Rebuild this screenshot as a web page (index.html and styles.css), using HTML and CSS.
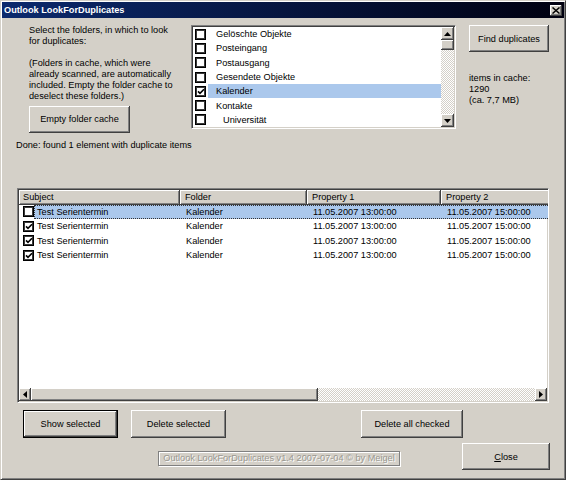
FILE: index.html
```html
<!DOCTYPE html>
<html lang="en">
<head>
    <meta charset="UTF-8">
    <title>Outlook LookForDuplicates</title>
    <link rel="stylesheet" href="styles.css">
</head>
<body>
    <div class="window">
        <!-- Title bar -->
        <div class="title-bar">
            <span class="title">Outlook LookForDuplicates</span>
            <span class="title-close">
                <svg width="8" height="7" viewBox="0 0 8 7"><path d="M0.5 0.5 L7.5 6.5 M7.5 0.5 L0.5 6.5" stroke="#000" stroke-width="1.5" fill="none"/></svg>
            </span>
        </div>

        <div class="client">
            <!-- Folder selection -->
            <div class="top">
                <div class="intro">
                    <p>Select the folders, in which to look<br>for duplicates:</p>
                    <p>(Folders in cache, which were<br>already scanned, are automatically<br>included. Empty the folder cache to<br>deselect these folders.)</p>
                    <button class="btn btn-cache">Empty folder cache</button>
                </div>

                <div class="folder-box sunken">
                    <ul class="folder-list">
                        <li><span class="check"></span><span class="folder-name">Gelöschte Objekte</span></li>
                        <li><span class="check"></span><span class="folder-name">Posteingang</span></li>
                        <li><span class="check"></span><span class="folder-name">Postausgang</span></li>
                        <li><span class="check"></span><span class="folder-name">Gesendete Objekte</span></li>
                        <li class="selected"><span class="check"><svg width="8" height="7" viewBox="0 0 8 7"><path d="M1 3.4 L3 5.4 L7 1.2" stroke="#000" stroke-width="1.6" fill="none"/></svg></span><span class="folder-name">Kalender</span></li>
                        <li><span class="check"></span><span class="folder-name">Kontakte</span></li>
                        <li><span class="check"></span><span class="folder-name sub">Universität</span></li>
                    </ul>
                    <div class="vscroll">
                        <span class="sb-btn"><svg width="7" height="4" viewBox="0 0 7 4"><path d="M3.5 0 L7 4 L0 4 Z" fill="#000"/></svg></span>
                        <span class="sb-thumb-v"></span>
                        <span class="sb-track"></span>
                        <span class="sb-btn"><svg width="7" height="4" viewBox="0 0 7 4"><path d="M0 0 L7 0 L3.5 4 Z" fill="#000"/></svg></span>
                    </div>
                </div>

                <div class="side">
                    <button class="btn btn-find">Find duplicates</button>
                    <p class="cache-info">items in cache:<br>1290<br>(ca. 7,7 MB)</p>
                </div>
            </div>

            <p class="status">Done: found 1 element with duplicate items</p>

            <!-- Results list -->
            <div class="results sunken">
                <div class="results-head">
                    <span class="head-cell col-subject">Subject</span>
                    <span class="head-cell col-folder">Folder</span>
                    <span class="head-cell col-prop">Property 1</span>
                    <span class="head-cell col-prop2">Property 2</span>
                </div>
                <div class="results-body">
                    <div class="result-row selected">
                        <span class="check"></span>
                        <span class="row-cells">
                            <span class="cell-subject">Test Serientermin</span>
                            <span class="cell-folder">Kalender</span>
                            <span class="cell-prop">11.05.2007 13:00:00</span>
                            <span class="cell-prop2">11.05.2007 15:00:00</span>
                        </span>
                    </div>
                    <div class="result-row">
                        <span class="check"><svg width="8" height="7" viewBox="0 0 8 7"><path d="M1 3.4 L3 5.4 L7 1.2" stroke="#000" stroke-width="1.6" fill="none"/></svg></span>
                        <span class="row-cells">
                            <span class="cell-subject">Test Serientermin</span>
                            <span class="cell-folder">Kalender</span>
                            <span class="cell-prop">11.05.2007 13:00:00</span>
                            <span class="cell-prop2">11.05.2007 15:00:00</span>
                        </span>
                    </div>
                    <div class="result-row">
                        <span class="check"><svg width="8" height="7" viewBox="0 0 8 7"><path d="M1 3.4 L3 5.4 L7 1.2" stroke="#000" stroke-width="1.6" fill="none"/></svg></span>
                        <span class="row-cells">
                            <span class="cell-subject">Test Serientermin</span>
                            <span class="cell-folder">Kalender</span>
                            <span class="cell-prop">11.05.2007 13:00:00</span>
                            <span class="cell-prop2">11.05.2007 15:00:00</span>
                        </span>
                    </div>
                    <div class="result-row">
                        <span class="check"><svg width="8" height="7" viewBox="0 0 8 7"><path d="M1 3.4 L3 5.4 L7 1.2" stroke="#000" stroke-width="1.6" fill="none"/></svg></span>
                        <span class="row-cells">
                            <span class="cell-subject">Test Serientermin</span>
                            <span class="cell-folder">Kalender</span>
                            <span class="cell-prop">11.05.2007 13:00:00</span>
                            <span class="cell-prop2">11.05.2007 15:00:00</span>
                        </span>
                    </div>
                </div>
                <div class="hscroll">
                    <span class="sb-btn"><svg width="4" height="7" viewBox="0 0 4 7"><path d="M0 3.5 L4 0 L4 7 Z" fill="#000"/></svg></span>
                    <span class="sb-thumb-h"></span>
                    <span class="sb-track"></span>
                    <span class="sb-btn"><svg width="4" height="7" viewBox="0 0 4 7"><path d="M0 0 L4 3.5 L0 7 Z" fill="#000"/></svg></span>
                </div>
            </div>

            <!-- Buttons -->
            <div class="actions">
                <button class="btn btn-default btn-show">Show selected</button>
                <button class="btn btn-delete">Delete selected</button>
                <button class="btn btn-delete-all">Delete all checked</button>
            </div>
            <div class="footer">
                <span class="version">Outlook LookForDuplicates v1.4 2007-07-04 © by Meigel</span>
                <button class="btn btn-close"><u>C</u>lose</button>
            </div>
        </div>
    </div>
</body>
</html>
```

FILE: styles.css
```css
body {
    margin: 0;
    padding: 0;
    background: #d4d0c8;
    font-family: "Liberation Sans", Arial, sans-serif;
    font-size: 9.2px;
    color: #000;
}

p {
    margin: 0;
}

.window {
    width: 566px;
    height: 480px;
    box-sizing: border-box;
    background: #d4d0c8;
    border: 1px solid;
    border-color: #d4d0c8 #404040 #404040 #d4d0c8;
    box-shadow: inset 1px 1px #fff, inset -1px -1px #808080;
    padding: 1px;
    overflow: hidden;
}

/* Title bar */
.title-bar {
    height: 16px;
    display: flex;
    align-items: center;
    justify-content: space-between;
    background: linear-gradient(to right, #0c2a6e, #000010);
    color: #fff;
    padding: 0 2px 0 2px;
}

.title {
    font-weight: bold;
}

.title-close {
    width: 12px;
    height: 11px;
    display: flex;
    align-items: center;
    justify-content: center;
    background: #d4d0c8;
    box-shadow: inset -1px -1px #404040, inset 1px 1px #fff, inset -2px -2px #808080;
}

/* Shared 3D pieces */
.btn {
    font: inherit;
    color: #000;
    border: 0;
    padding: 0;
    background: #d4d0c8;
    box-shadow: inset -1px -1px #404040, inset 1px 1px #fff, inset -2px -2px #808080, inset 2px 2px #d4d0c8;
}

.btn-default {
    border: 1px solid #000;
}

.sunken {
    border: 1px solid;
    border-color: #808080 #fff #fff #808080;
    box-shadow: inset 1px 1px #404040, inset -1px -1px #d4d0c8;
    background: #fff;
    padding: 1px;
    box-sizing: border-box;
}

.check {
    width: 11px;
    height: 11px;
    box-sizing: border-box;
    flex-shrink: 0;
    border: 1px solid #000;
    box-shadow: inset 0 0 0 1px #3a3a3a;
    background: #fff;
    display: flex;
    align-items: center;
    justify-content: center;
}

.sb-btn {
    width: 13px;
    height: 13px;
    flex-shrink: 0;
    display: flex;
    align-items: center;
    justify-content: center;
    background: #d4d0c8;
    box-shadow: inset -1px -1px #404040, inset 1px 1px #fff, inset -2px -2px #808080;
}

.sb-track {
    flex: 1;
    background: repeating-conic-gradient(#d4d0c8 0 25%, #fff 0 50%) 0 0 / 2px 2px;
}

/* Top area */
.top {
    display: flex;
    padding: 7px 0 0 27px;
    height: 108px;
}

.intro {
    width: 162px;
    line-height: 11px;
}

.intro p + p {
    margin-top: 11px;
}

.btn-cache {
    width: 101px;
    height: 27px;
    margin-top: 4px;
}

.folder-box {
    width: 265px;
    height: 104px;
    display: flex;
}

.folder-list {
    list-style: none;
    margin: 0;
    padding: 0;
    flex: 1;
}

.folder-list li {
    height: 14.3px;
    display: flex;
    align-items: center;
    padding-left: 2px;
}

.folder-name {
    flex: 1;
    height: 100%;
    display: flex;
    align-items: center;
    margin-left: 2px;
    padding-left: 8px;
}

.folder-name.sub {
    padding-left: 15px;
}

.folder-list li.selected .folder-name {
    background: #abc8ec;
}

.vscroll {
    width: 13px;
    display: flex;
    flex-direction: column;
}

.sb-thumb-v {
    height: 10px;
    background: #d4d0c8;
    box-shadow: inset -1px -1px #404040, inset 1px 1px #fff, inset -2px -2px #808080;
}

.side {
    margin-left: 13px;
    width: 80px;
}

.btn-find {
    width: 80px;
    height: 27px;
}

.cache-info {
    margin-top: 21px;
    line-height: 11px;
}

.status {
    margin-top: 7px;
    padding-left: 14px;
    line-height: 11px;
}

/* Results list view */
.results {
    margin: 37px 0 0 15px;
    width: 532px;
    height: 215px;
    display: flex;
    flex-direction: column;
    overflow: hidden;
}

.results-head {
    display: flex;
    height: 14.5px;
    flex-shrink: 0;
}

.head-cell {
    flex-shrink: 0;
    display: flex;
    align-items: center;
    padding-left: 4px;
    box-sizing: border-box;
    background: #d4d0c8;
    box-shadow: inset -1px -1px #404040, inset 1px 1px #fff, inset -2px -2px #808080;
}

.col-subject { width: 161px; }
.col-folder { width: 127px; padding-left: 5px; }
.col-prop { width: 134px; padding-left: 5px; }
.col-prop2 { width: 134px; padding-left: 5px; }

.results-body {
    flex: 1;
    background: #fff;
}

.result-row {
    height: 14.5px;
    display: flex;
    align-items: center;
    padding-left: 4px;
}

.row-cells {
    flex: 1;
    height: 100%;
    display: flex;
    align-items: center;
    box-sizing: border-box;
}

.result-row.selected .row-cells {
    background: #abc8ec;
    outline: 1px dotted #333;
    outline-offset: -1px;
}

.row-cells span {
    flex-shrink: 0;
    box-sizing: border-box;
    white-space: nowrap;
}

.cell-subject { width: 147px; padding-left: 3px; }
.cell-folder { width: 127px; padding-left: 5px; }
.cell-prop { width: 134px; padding-left: 5px; }
.cell-prop2 { width: 110px; padding-left: 5px; }

.hscroll {
    height: 13px;
    display: flex;
    flex-shrink: 0;
}

.hscroll .sb-btn {
    width: 12px;
}

.sb-thumb-h {
    width: 287px;
    background: #d4d0c8;
    box-shadow: inset -1px -1px #404040, inset 1px 1px #fff, inset -2px -2px #808080;
}

/* Bottom buttons */
.actions {
    display: flex;
    margin-top: 7px;
    padding-left: 21px;
}

.actions .btn {
    height: 28px;
}

.btn-show { width: 95px; }
.btn-delete { width: 95px; margin-left: 13px; }
.btn-delete-all { width: 102px; margin-left: 135px; }

.footer {
    display: flex;
    align-items: center;
    margin-top: 5px;
    padding-left: 156px;
}

.version {
    width: 242px;
    height: 15px;
    box-sizing: border-box;
    display: flex;
    align-items: center;
    justify-content: center;
    border: 1px solid #808080;
    box-shadow: 1px 1px #fff, inset 1px 1px #fff;
    color: #9a9890;
    text-shadow: 1px 1px #fff;
    margin-top: 3px;
}

.btn-close {
    width: 88px;
    height: 27px;
    margin-left: 62px;
}
```
